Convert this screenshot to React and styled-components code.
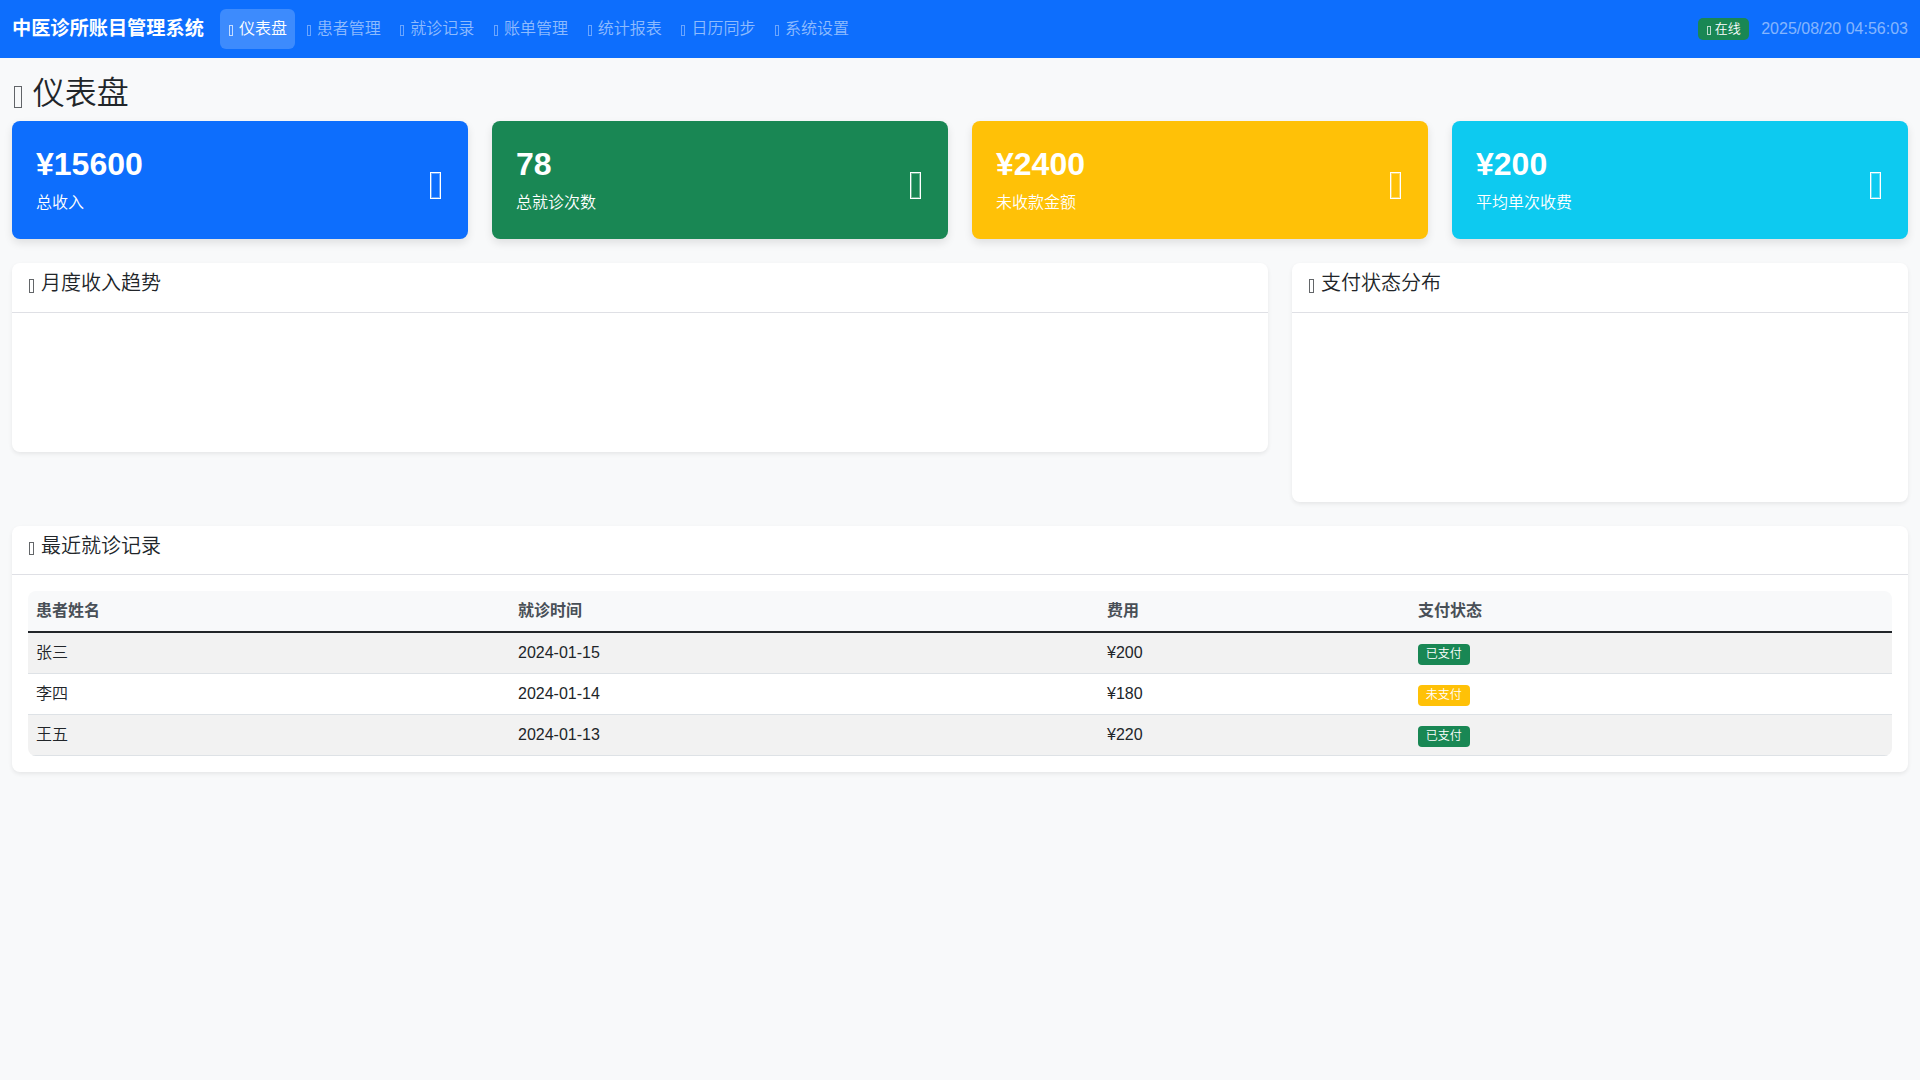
import React from 'react';
import styled, { createGlobalStyle } from 'styled-components';

const GlobalStyle = createGlobalStyle`
  * { box-sizing: border-box; }
  html, body { margin: 0; padding: 0; }
  body {
    min-height: 100vh;
    background-color: #f8f9fa;
    color: #212529;
    font-family: "Liberation Sans", "Noto Sans CJK SC", sans-serif;
    font-size: 16px;
    font-weight: 350;
    line-height: 1.5;
  }
`;

// Navbar
const Navbar = styled.nav`
  display: flex;
  align-items: center;
  justify-content: space-between;
  height: 58px;
  padding: 0 12px;
  background-color: #0d6efd;
`;

const NavLeft = styled.div`
  display: flex;
  align-items: center;
`;

const Brand = styled.a`
  margin-right: 16px;
  color: #fff;
  font-size: 19.2px;
  font-weight: 700;
  text-decoration: none;
`;

const NavLink = styled.a`
  display: block;
  margin-right: 2.6px;
  padding: 8px;
  border-radius: 6px;
  color: ${(p) => (p.$active ? '#fff' : 'rgba(255, 255, 255, 0.55)')};
  background-color: ${(p) => (p.$active ? 'rgba(255, 255, 255, 0.2)' : 'transparent')};
  text-decoration: none;
`;

const NavRight = styled.div`
  display: flex;
  align-items: center;
  gap: 12px;
`;

const OnlineBadge = styled.span`
  padding: 4.5px 8.45px;
  border-radius: 5px;
  background-color: #198754;
  color: #fff;
  font-size: 13px;
  line-height: 13.6px;
`;

const Clock = styled.span`
  color: rgba(255, 255, 255, 0.5);
`;

// The icon font never loaded in this screen, so every icon shows as an empty box
const Icon = styled.i`
  display: inline-block;
  width: 0.26em;
  height: 0.66em;
  margin-left: 0.06em;
  margin-right: calc(0.08em + ${(p) => p.$gap ?? 4}px);
  border: 1px solid currentColor;
  opacity: ${(p) => (p.$solid ? 1 : 0.7)};
  box-shadow: ${(p) => (p.$solid ? 'inset 0 0 0 1px rgba(255, 255, 255, 0.35)' : 'none')};
  vertical-align: -0.11em;
`;

// Page
const Page = styled.main`
  padding: 16px 12px 0;
`;

const PageTitle = styled.h2`
  margin: 0 0 8px;
  font-size: 32px;
  font-weight: 350;
  line-height: 39px;
`;

const StatGrid = styled.div`
  display: grid;
  grid-template-columns: repeat(4, 1fr);
  gap: 24px;
  margin-bottom: 24px;
`;

const StatCard = styled.div`
  display: flex;
  align-items: center;
  justify-content: space-between;
  padding: 24px;
  border-radius: 8px;
  background-color: ${(p) => p.$bg};
  color: #fff;
  box-shadow: 0 4px 8px rgba(0, 0, 0, 0.1);
`;

const StatValue = styled.div`
  margin-bottom: 8px;
  font-size: 32px;
  font-weight: 700;
  line-height: 1.2;
`;

const StatLabel = styled.div`
  line-height: 24px;
`;

const StatIcon = styled.div`
  font-size: 40px;
  line-height: 1.5;
`;

const PanelGrid = styled.div`
  display: grid;
  grid-template-columns: repeat(12, 1fr);
  align-items: start;
  gap: 24px;
  margin-bottom: 24px;
`;

const Panel = styled.section`
  grid-column: span ${(p) => p.$span || 12};
  border-radius: 8px;
  background-color: #fff;
  box-shadow: 0 2px 4px rgba(0, 0, 0, 0.075);
`;

const PanelHeader = styled.div`
  padding: 8px 16px;
  border-bottom: 1px solid #dfe0e5;
`;

const PanelTitle = styled.h5`
  margin: 0 0 8.6px;
  font-size: 20px;
  font-weight: 350;
  line-height: 1.2;
`;

const ChartArea = styled.div`
  height: ${(p) => p.$height}px;
`;

const PanelBody = styled.div`
  padding: 16px;
`;

const TableWrap = styled.div`
  overflow: hidden;
  border-radius: 8px;
`;

const Table = styled.table`
  width: 100%;
  table-layout: fixed;
  border-collapse: collapse;
`;

const Th = styled.th`
  width: ${(p) => p.$width}px;
  padding: 8px;
  border-bottom: 2px solid #212529;
  background-color: #f8f9fa;
  color: #495057;
  font-weight: 700;
  text-align: left;
`;

const Tr = styled.tr`
  background-color: ${(p) => (p.$striped ? '#f2f2f2' : '#fff')};
`;

const Td = styled.td`
  padding: 8px;
  border-bottom: 1px solid #dee2e6;
`;

const Badge = styled.span`
  display: inline-block;
  padding: 0.35em 0.65em;
  border-radius: 4px;
  background-color: ${(p) => p.$bg};
  color: #fff;
  font-size: 12px;
  line-height: 1;
  vertical-align: baseline;
`;

const navItems = [
  { label: '仪表盘', active: true },
  { label: '患者管理' },
  { label: '就诊记录' },
  { label: '账单管理' },
  { label: '统计报表' },
  { label: '日历同步' },
  { label: '系统设置' },
];

const stats = [
  { value: '¥15600', label: '总收入', bg: '#0d6efd' },
  { value: '78', label: '总就诊次数', bg: '#198754' },
  { value: '¥2400', label: '未收款金额', bg: '#ffc107' },
  { value: '¥200', label: '平均单次收费', bg: '#0dcaf0' },
];

const visits = [
  { name: '张三', date: '2024-01-15', fee: '¥200', paid: true },
  { name: '李四', date: '2024-01-14', fee: '¥180', paid: false },
  { name: '王五', date: '2024-01-13', fee: '¥220', paid: true },
];

const App = () => {
  return (
    <>
      <GlobalStyle />
      <Navbar>
        <NavLeft>
          <Brand href="#">中医诊所账目管理系统</Brand>
          {navItems.map((item) => (
            <NavLink href="#" key={item.label} $active={item.active}>
              <Icon $gap={4.7} />
              {item.label}
            </NavLink>
          ))}
        </NavLeft>
        <NavRight>
          <OnlineBadge>
            <Icon $gap={3} />在线
          </OnlineBadge>
          <Clock>2025/08/20 04:56:03</Clock>
        </NavRight>
      </Navbar>

      <Page>
        <PageTitle>
          <Icon $gap={8} />仪表盘
        </PageTitle>

        <StatGrid>
          {stats.map((s) => (
            <StatCard key={s.label} $bg={s.bg}>
              <div>
                <StatValue>{s.value}</StatValue>
                <StatLabel>{s.label}</StatLabel>
              </div>
              <StatIcon>
                <Icon $gap={0} $solid />
              </StatIcon>
            </StatCard>
          ))}
        </StatGrid>

        <PanelGrid>
          <Panel $span={8}>
            <PanelHeader>
              <PanelTitle>
                <Icon $gap={5} />月度收入趋势
              </PanelTitle>
            </PanelHeader>
            <ChartArea $height={138.9} />
          </Panel>
          <Panel $span={4}>
            <PanelHeader>
              <PanelTitle>
                <Icon $gap={5} />支付状态分布
              </PanelTitle>
            </PanelHeader>
            <ChartArea $height={188.9} />
          </Panel>
        </PanelGrid>

        <Panel>
          <PanelHeader>
            <PanelTitle>
              <Icon $gap={5} />最近就诊记录
            </PanelTitle>
          </PanelHeader>
          <PanelBody>
            <TableWrap>
              <Table>
                <thead>
                  <tr>
                    <Th $width={482}>患者姓名</Th>
                    <Th $width={589}>就诊时间</Th>
                    <Th $width={311}>费用</Th>
                    <Th $width={482}>支付状态</Th>
                  </tr>
                </thead>
                <tbody>
                  {visits.map((v, i) => (
                    <Tr key={v.name} $striped={i % 2 === 0}>
                      <Td>{v.name}</Td>
                      <Td>{v.date}</Td>
                      <Td>{v.fee}</Td>
                      <Td>
                        <Badge $bg={v.paid ? '#198754' : '#ffc107'}>
                          {v.paid ? '已支付' : '未支付'}
                        </Badge>
                      </Td>
                    </Tr>
                  ))}
                </tbody>
              </Table>
            </TableWrap>
          </PanelBody>
        </Panel>
      </Page>
    </>
  );
};

export default App;
